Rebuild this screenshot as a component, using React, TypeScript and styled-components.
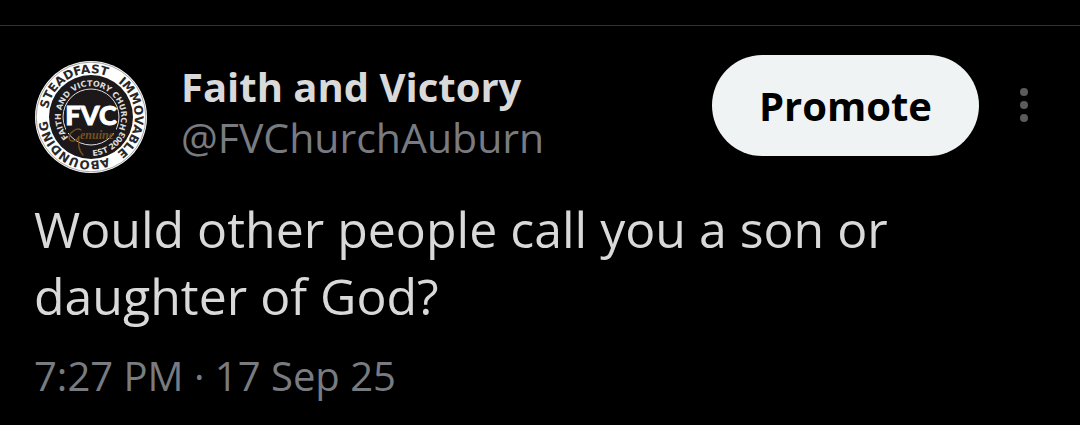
import React from "react";
import styled, { createGlobalStyle } from "styled-components";

const GlobalStyle = createGlobalStyle`
  *, *::before, *::after { box-sizing: border-box; }
  body {
    margin: 0;
    background: #000;
    color: #d9d9d9;
    font-family: "Open Sans", "Noto Sans", sans-serif;
  }
`;

const Page = styled.main`
  padding-top: 25px;
`;

const Post = styled.article`
  border-top: 1px solid #333;
  padding: 29px 46px 20px 34px;
`;

const Header = styled.header`
  display: flex;
  align-items: center;
`;

const Avatar = styled.svg`
  flex: none;
  width: 114px;
  height: 114px;
  margin: 5px 33px 0 0;
`;

const Author = styled.div`
  flex: 1;
  min-width: 0;
  padding-bottom: 5px;
  line-height: 50px;
`;

const Name = styled.div`
  font-size: 40px;
  font-weight: 700;
`;

const Handle = styled.a`
  display: block;
  color: #787b80;
  font-size: 41px;
  text-decoration: none;
`;

const PromoteButton = styled.button`
  flex: none;
  align-self: flex-start;
  border: 0;
  border-radius: 51px;
  padding: 23px 47px 22px;
  background: #eff3f4;
  color: #000;
  font-family: inherit;
  font-size: 40px;
  font-weight: 700;
  line-height: 56px;
`;

const MoreButton = styled.button`
  flex: none;
  align-self: flex-start;
  display: flex;
  margin: 30px 0 0 35px;
  padding: 0;
  border: 0;
  background: none;
  color: #5b5b5b;
`;

const Body = styled.p`
  margin: 22px 0 0;
  font-size: 50px;
  line-height: 67px;
`;

const Timestamp = styled.time`
  display: block;
  margin-top: 18px;
  color: #787b80;
  font-size: 40px;
  line-height: 56px;
`;

const ChurchLogo = () => (
  <Avatar viewBox="-57 -57 114 114" role="img" aria-label="Faith and Victory Church">
    <defs>
      <path id="outer-ring" d="M21.3 38.5A44 44 0 0 1 -21.3 -38.5A44 44 0 0 1 21.3 38.5" />
      <path id="name-ring" d="M4.9 30.6A31 31 0 0 1 -4.9 -30.6A31 31 0 0 1 4.9 30.6" />
      <path id="est-ring" d="M-24 30.5A38.8 38.8 0 0 0 37.5 -10" />
    </defs>
    <circle r="56" fill="#fff" />
    <circle r="54.8" fill="none" stroke="#666" strokeWidth="0.6" />
    <circle r="42" fill="#1c1819" />
    <circle r="28" fill="none" stroke="#ddd" strokeWidth="1" />
    <g fill="#2a2728" fontFamily="DejaVu Sans" fontWeight="700" fontSize="12" textAnchor="middle">
      <text><textPath href="#outer-ring" startOffset="16.7%">ABOUNDING</textPath></text>
      <text><textPath href="#outer-ring" startOffset="50%">STEADFAST</textPath></text>
      <text><textPath href="#outer-ring" startOffset="83.3%">IMMOVABLE</textPath></text>
    </g>
    <g fill="#dcdcdc" fontFamily="DejaVu Sans" fontWeight="700" fontSize="8" textAnchor="middle">
      <text><textPath href="#name-ring" startOffset="50%">FAITH AND VICTORY CHURCH</textPath></text>
      <text><textPath href="#est-ring" startOffset="50%">EST 2003</textPath></text>
    </g>
    <path d="M-25 8H25V16H-25Z" fill="#1c1819" />
    <text y="8" fill="#fff" stroke="#fff" strokeWidth="0.9" fontFamily="Lato" fontWeight="900" fontSize="27" textAnchor="middle">FVC</text>
    <g fill="none" stroke="#76501f" strokeWidth="1.4" strokeLinecap="round">
      <path d="M-10 13C-14 10 -21 15 -22 20C-22 26 -14 25 -12 19C-13 26 -12 34 -8 38" />
    </g>
    <text x="-11" y="22" fill="#76501f" fontFamily="Liberation Serif" fontStyle="italic" fontWeight="700" fontSize="12">enuine</text>
  </Avatar>
);

export default function App() {
  return (
    <>
      <GlobalStyle />
      <Page>
        <Post>
          <Header>
            <ChurchLogo />
            <Author>
              <Name>Faith and Victory</Name>
              <Handle href="#profile">@FVChurchAuburn</Handle>
            </Author>
            <PromoteButton type="button">Promote</PromoteButton>
            <MoreButton type="button" aria-label="More options">
              <svg width="20" height="40" viewBox="0 0 20 40" fill="currentColor">
                <circle cx="10" cy="7" r="4" />
                <circle cx="10" cy="20" r="4" />
                <circle cx="10" cy="33" r="4" />
              </svg>
            </MoreButton>
          </Header>
          <Body>Would other people call you a son or daughter of God?</Body>
          <Timestamp dateTime="2025-09-17T19:27">7:27 PM · 17 Sep 25</Timestamp>
        </Post>
      </Page>
    </>
  );
}
